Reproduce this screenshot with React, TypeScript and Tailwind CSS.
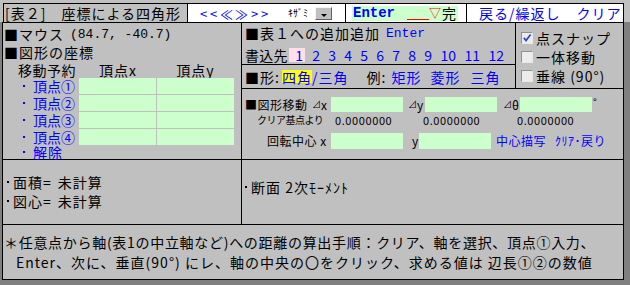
import React from 'react';

const Dot = ({ blue }: { blue?: boolean }) => (
    <span className={blue ? 'inline-block h-[2px] w-[2px] bg-[#0000ff]' : 'inline-block h-[2px] w-[2px] bg-black'} />
);

const Box = ({ w }: { w: string }) => <div className={`h-full bg-[#ccffcc] ${w}`} />;

const Check = ({ checked }: { checked?: boolean }) => (
    <span className="relative inline-block h-[12px] w-[12px] border border-[#909090] border-b-[#e8e8e8] border-r-[#e8e8e8] bg-[#ececec]">
        {checked && (
            <svg viewBox="0 0 10 10" className="absolute inset-0 h-full w-full">
                <path d="M1.8 4.8 L4 7.6 L8.6 1.6" stroke="#2848c8" strokeWidth="1.7" fill="none" />
            </svg>
        )}
    </span>
);

const vertices = ['頂点①', '頂点②', '頂点③', '頂点④'];
const slots = ['1', '2', '3', '4', '5', '6', '7', '8', '9', '10', '11', '12'];

export default function App() {
    return (
        <div className="h-[285px] w-[630px] overflow-hidden bg-[#c0c0c0] font-['Noto_Sans_CJK_JP','Noto_Sans',sans-serif] text-[14px] leading-none tracking-[1px] text-black">
            {/* title bar */}
            <div className="ml-[3px] mt-[3px] flex h-[19px] w-[621px] border-x border-t border-black">
                <div className="flex w-[184px] items-center border-r border-black pl-[1px]">[表２]　座標による四角形</div>
                <div className="flex w-[158px] items-center border-r border-black bg-white pl-[12px] text-[#0000ff]">
                    <span className="w-[10px] text-[13px]">&lt;</span>
                    <span className="w-[10px] text-[13px]">&lt;</span>
                    <span className="w-[15px] text-[13px]">≪</span>
                    <span className="w-[16px] text-[13px]">≫</span>
                    <span className="w-[10px] text-[13px]">&gt;</span>
                    <span className="w-[10px] text-[13px]">&gt;</span>
                    <span className="ml-[17px] text-[10px] tracking-normal text-black">ｷｻﾞﾐ</span>
                    <span className="relative ml-[7px] h-[13px] w-[17px] border border-[#f4f4f4] border-b-[#606060] border-r-[#606060] bg-[#c0c0c0]">
                        <svg viewBox="0 0 6 3" className="absolute bottom-[2px] left-[5px] h-[3px] w-[6px]">
                            <path d="M0 0 L6 0 L3 3 Z" fill="#000" />
                        </svg>
                    </span>
                </div>
                <div className="flex w-[121px] items-center border-r border-black bg-white pl-[6px]">
                    <div className="flex h-[15px] w-[106px] items-center bg-[#ccffcc] pl-[1px]">
                        <span className="font-['Liberation_Mono',monospace] text-[14px] font-bold tracking-normal text-[#0000ff]">Enter</span>
                        <span className="mb-[1px] ml-[12px] h-[1px] w-[22px] self-end bg-[#ff0000]" />
                        <span className="text-[12px] tracking-normal text-[#ff0000]">▽</span>
                        <span className="ml-[1px]">完</span>
                    </div>
                </div>
                <div className="flex flex-1 items-center bg-white pl-[12px] text-[#0000ff]">
                    戻る/繰返し<span className="ml-[16px]">クリア</span>
                </div>
            </div>

            {/* body */}
            <div className="flex h-[263px] flex-col bg-[#808080] pb-[5px] pl-[2px] pr-[6px]">
                <div className="flex flex-1 flex-col border border-black bg-[#c0c0c0]">
                    {/* upper area */}
                    <div className="flex h-[137px] border-b border-black">
                        <div className="w-[239px] border-r border-black pl-[1px] pt-[2px]">
                            <div className="flex h-[18px] items-center whitespace-nowrap">
                                ■マウス
                                <span className="ml-[6px] font-['Liberation_Mono',monospace] text-[13px] tracking-normal">(84.7, -40.7)</span>
                            </div>
                            <div className="flex h-[18px] items-center">■図形の座標</div>
                            <div className="-ml-[1px] flex h-[17px] items-center whitespace-nowrap">
                                <span className="w-[76px] pl-[15px] tracking-[0.5px]">移動予約</span>
                                <span className="w-[78px] text-center">頂点x</span>
                                <span className="w-[77px] text-center">頂点y</span>
                            </div>
                            <div className="-ml-[1px] flex flex-col gap-[1px]">
                                {vertices.map(v => (
                                    <div key={v} className="flex h-[16px]">
                                        <span className="flex w-[76px] items-center whitespace-nowrap pl-[20px] tracking-[0px] text-[#0000ff]">
                                            <Dot blue />
                                            <span className="ml-[8px]">{v}</span>
                                        </span>
                                        <Box w="w-[77px]" />
                                        <span className="w-[1px]" />
                                        <Box w="w-[77px]" />
                                    </div>
                                ))}
                            </div>
                            <div className="-ml-[1px] flex h-[14px] items-center pl-[20px] text-[#0000ff]">
                                <Dot blue />
                                <span className="ml-[8px]">解除</span>
                            </div>
                        </div>

                        <div className="flex flex-1 flex-col">
                            <div className="flex h-[66px] border-b border-black">
                                <div className="flex w-[274px] flex-col border-r border-black">
                                    <div className="h-[42px] border-b border-black pl-[3px]">
                                        <div className="flex h-[20px] items-center whitespace-nowrap">
                                            ■表１への追加追加
                                            <span className="ml-[6px] font-['Liberation_Mono',monospace] text-[13px] tracking-normal text-[#0000ff]">Enter</span>
                                        </div>
                                        <div className="mt-[5px] flex h-[14px] whitespace-nowrap">
                                            <span className="flex w-[44px] items-center tracking-[0.3px]">書込先</span>
                                            {slots.map(s => (
                                                <span
                                                    key={s}
                                                    className={
                                                        s === '1'
                                                            ? 'flex w-[16px] items-center justify-end bg-[#ffe0e8] pr-[2px] tracking-normal text-[#0000ff]'
                                                            : s.length > 1
                                                              ? 'flex w-[24px] items-center justify-end pr-[1px] tracking-normal text-[#0000ff]'
                                                              : 'flex w-[16px] items-center justify-end pr-[1px] tracking-normal text-[#0000ff]'
                                                    }
                                                >
                                                    {s}
                                                </span>
                                            ))}
                                        </div>
                                    </div>
                                    <div className="flex flex-1 items-center whitespace-nowrap pl-[3px]">
                                        <span className="w-[37px]">■形:</span>
                                        <span className="flex h-[13px] w-[30px] items-center bg-[#ffff00] text-[#0000ff]">四角</span>
                                        <span className="text-[#0000ff]">/三角</span>
                                        <span className="ml-[18px] w-[25px]">例:</span>
                                        <span className="text-[#0000ff]">矩形</span>
                                        <span className="ml-[9px] text-[#0000ff]">菱形</span>
                                        <span className="ml-[10px] text-[#0000ff]">三角</span>
                                    </div>
                                </div>
                                <div className="flex-1 pl-[5px] pt-[5px]">
                                    <div className="flex h-[19px] items-center">
                                        <Check checked />
                                        <span className="ml-[3px]">点スナップ</span>
                                    </div>
                                    <div className="flex h-[19px] items-center">
                                        <Check />
                                        <span className="ml-[3px]">一体移動</span>
                                    </div>
                                    <div className="flex h-[19px] items-center">
                                        <Check />
                                        <span className="ml-[3px]">垂線 (90°)</span>
                                    </div>
                                </div>
                            </div>

                            <div className="flex-1 pt-[8px] text-[12px] tracking-[0.5px]">
                                <div className="flex h-[15px] items-center whitespace-nowrap">
                                    <span className="w-[70px] pl-[3px]">■図形移動</span>
                                    <span className="flex w-[19px] items-center">
                                        <span className="text-[9px] tracking-normal">⊿</span>x
                                    </span>
                                    <Box w="w-[72px]" />
                                    <span className="flex w-[22px] items-center pl-[5px]">
                                        <span className="text-[9px] tracking-normal">⊿</span>y
                                    </span>
                                    <Box w="w-[72px]" />
                                    <span className="flex w-[23px] items-center pl-[6px] tracking-normal">
                                        <span className="text-[9px]">⊿</span>θ
                                    </span>
                                    <Box w="w-[72px]" />
                                    <span className="ml-[1px] self-start text-[10px]">°</span>
                                </div>
                                <div className="flex h-[16px] items-center whitespace-nowrap">
                                    <span className="w-[93px] pl-[15px] text-[10px] tracking-[-0.5px]">クリア基点より</span>
                                    <span className="w-[88px] text-[11px] tracking-[0.6px]">0.0000000</span>
                                    <span className="w-[94px] text-[11px] tracking-[0.6px]">0.0000000</span>
                                    <span className="text-[11px] tracking-[0.6px]">0.0000000</span>
                                </div>
                                <div className="mt-[5px] flex h-[16px] items-center whitespace-nowrap">
                                    <span className="w-[89px] pl-[25px]">回転中心 x</span>
                                    <Box w="w-[72px]" />
                                    <span className="w-[16px] pl-[9px]">y</span>
                                    <Box w="w-[72px]" />
                                    <span className="ml-[5px] text-[#0000ff]">中心描写</span>
                                    <span className="ml-[9px] text-[#0000ff]">ｸﾘｱ･戻り</span>
                                </div>
                            </div>
                        </div>
                    </div>

                    {/* results */}
                    <div className="flex h-[65px] border-b border-black">
                        <div className="w-[239px] border-r border-black pl-[4px] pt-[12px]">
                            <div className="flex h-[19px] items-center">
                                <Dot />
                                <span className="ml-[4px]">面積=</span>
                                <span className="ml-[6px]">未計算</span>
                            </div>
                            <div className="flex h-[19px] items-center">
                                <Dot />
                                <span className="ml-[4px]">図心=</span>
                                <span className="ml-[6px]">未計算</span>
                            </div>
                        </div>
                        <div className="flex-1 pl-[3px] pt-[20px]">
                            <div className="flex h-[14px] items-center">
                                <Dot />
                                <span className="ml-[4px]">断面 2次ﾓｰﾒﾝﾄ</span>
                            </div>
                        </div>
                    </div>

                    {/* note */}
                    <div className="flex-1 pl-[1px] pt-[7px]">
                        <div className="flex h-[20px] items-center whitespace-nowrap tracking-[0.7px]">
                            ＊任意点から軸(表1の中立軸など)への距離の算出手順：クリア、軸を選択、頂点①入力、
                        </div>
                        <div className="flex h-[20px] items-center whitespace-nowrap pl-[12px]">
                            Enter、次に、垂直(90°) にレ、軸の中央の〇をクリック、求める値は 辺長①②の数値
                        </div>
                    </div>
                </div>
            </div>
        </div>
    );
}
